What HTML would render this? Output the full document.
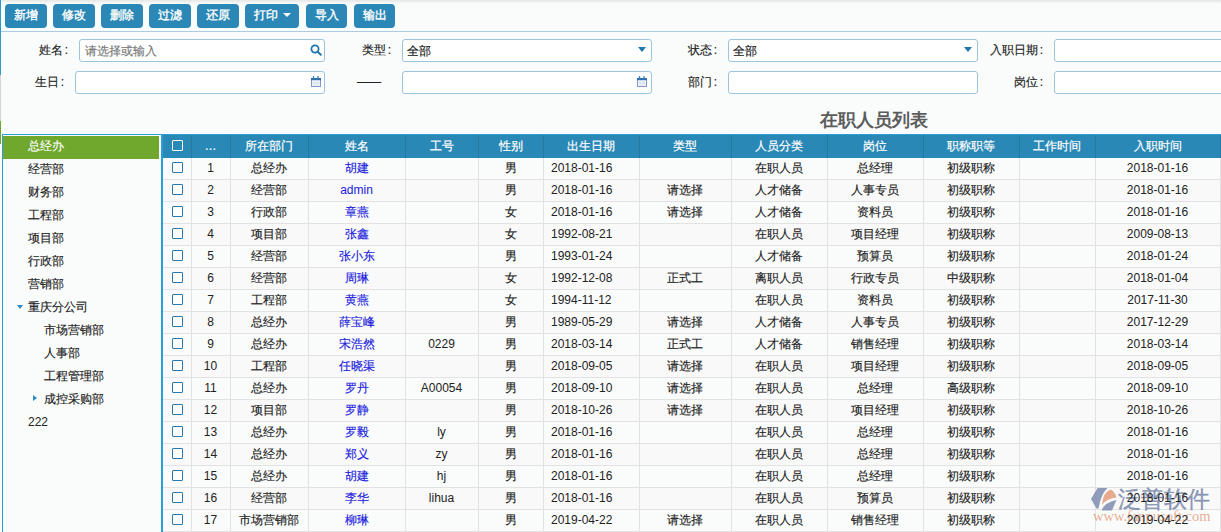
<!DOCTYPE html><html><head><meta charset="utf-8"><style>
*{margin:0;padding:0;box-sizing:border-box}
html,body{width:1221px;height:532px;overflow:hidden}
body{position:relative;background:#fafcfc;font-family:"Liberation Sans",sans-serif;font-size:12px;color:#222}
.c{-webkit-text-stroke:0.15px currentColor}
.a{position:absolute}
.btn{position:absolute;top:4px;height:24px;background:#2b88b6;border-radius:4px;color:#fff;font-size:12px;line-height:22px;text-align:center;-webkit-text-stroke:0.35px #fff}
.lbl{-webkit-text-stroke:0.15px currentColor;position:absolute;font-size:12px;color:#222;line-height:14px;white-space:nowrap}
.inp{position:absolute;height:23px;border:1px solid #9cc3e0;border-radius:3px;background:#fff}
.th{-webkit-text-stroke:0.2px #fff;position:absolute;top:135px;height:23px;line-height:23px;color:#fff;text-align:center;font-size:12px;white-space:nowrap}
.vs{position:absolute;width:1px}
.td{z-index:2;position:absolute;height:21px;line-height:21px;text-align:center;white-space:nowrap;color:#222}
.tree{-webkit-text-stroke:0.15px currentColor;position:absolute;left:28px;height:23px;line-height:23px;white-space:nowrap;color:#222}
</style></head><body>
<div class="a" style="left:0;top:0;width:1221px;height:3px;background:linear-gradient(#e6e7e7,#f5f6f6)"></div>
<div class="a" style="left:0;top:0;width:1px;height:75px;background:#2a9ad3"></div>
<div class="a" style="left:0;top:75px;width:1px;height:46px;background:#d6d6d6"></div>
<div class="a" style="left:0;top:121px;width:1px;height:23px;background:#6ea82b"></div>
<div class="btn" style="left:5px;width:42px">新增</div>
<div class="btn" style="left:53px;width:42px">修改</div>
<div class="btn" style="left:101px;width:42px">删除</div>
<div class="btn" style="left:149px;width:42px">过滤</div>
<div class="btn" style="left:197px;width:42px">还原</div>
<div class="btn" style="left:245px;width:54px;text-align:left;padding-left:9px">打印<span class="a" style="left:38px;top:9px;width:0;height:0;border-left:4px solid transparent;border-right:4px solid transparent;border-top:4px solid #fff"></span></div>
<div class="btn" style="left:306px;width:41px">导入</div>
<div class="btn" style="left:354px;width:41px">输出</div>
<div class="a" style="left:1px;top:31px;width:1220px;height:1px;background:#a9cbe3"></div>
<div class="lbl" style="right:1153px;top:43px">姓名<span style="margin-left:1.5px">:</span></div>
<div class="lbl" style="right:830px;top:43px">类型<span style="margin-left:1.5px">:</span></div>
<div class="lbl" style="right:504px;top:43px">状态<span style="margin-left:1.5px">:</span></div>
<div class="lbl" style="right:178px;top:43px">入职日期<span style="margin-left:1.5px">:</span></div>
<div class="lbl" style="right:1157px;top:75px">生日<span style="margin-left:1.5px">:</span></div>
<div class="lbl" style="right:504px;top:75px">部门<span style="margin-left:1.5px">:</span></div>
<div class="lbl" style="right:178px;top:75px">岗位<span style="margin-left:1.5px">:</span></div>
<div class="lbl" style="left:357px;top:75px">——</div>
<div class="inp" style="left:79px;top:39px;width:246px"><span class="a c" style="left:5px;top:3px;line-height:16px;color:#777">请选择或输入</span></div>
<div class="inp" style="left:402px;top:39px;width:250px"><span class="a c" style="left:4px;top:3px;line-height:16px;color:#111">全部</span></div>
<div class="inp" style="left:728px;top:39px;width:250px"><span class="a c" style="left:4px;top:3px;line-height:16px;color:#111">全部</span></div>
<div class="inp" style="left:1054px;top:39px;width:250px"></div>
<div class="inp" style="left:75px;top:71px;width:250px"></div>
<div class="inp" style="left:402px;top:71px;width:250px"></div>
<div class="inp" style="left:728px;top:71px;width:250px"></div>
<div class="inp" style="left:1054px;top:71px;width:250px"></div>
<svg class="a" style="left:310px;top:44px" width="12" height="12" viewBox="0 0 12 12"><circle cx="5" cy="5" r="3.6" fill="none" stroke="#1f78ad" stroke-width="1.8"/><path d="M7.6 7.6 L10.8 10.8" stroke="#1f78ad" stroke-width="2" stroke-linecap="round"/></svg>
<svg class="a" style="left:311px;top:76px" width="10" height="11" viewBox="0 0 10 11"><rect x="0.5" y="2.5" width="9" height="8" fill="#f3f6fa" stroke="#8398c8" stroke-width="1"/><rect x="0" y="2" width="10" height="2.2" fill="#2f6fae"/><path d="M2.5 0 V3 M7 0 V3" stroke="#3f7cb6" stroke-width="1.3"/><path d="M3 4.5 V10 M5 4.5 V10 M7 4.5 V10 M1 7 H9" stroke="#d3e2ef" stroke-width="0.8"/></svg>
<svg class="a" style="left:637px;top:76px" width="10" height="11" viewBox="0 0 10 11"><rect x="0.5" y="2.5" width="9" height="8" fill="#f3f6fa" stroke="#8398c8" stroke-width="1"/><rect x="0" y="2" width="10" height="2.2" fill="#2f6fae"/><path d="M2.5 0 V3 M7 0 V3" stroke="#3f7cb6" stroke-width="1.3"/><path d="M3 4.5 V10 M5 4.5 V10 M7 4.5 V10 M1 7 H9" stroke="#d3e2ef" stroke-width="0.8"/></svg>
<div class="a" style="left:638px;top:47px;width:0;height:0;border-left:4px solid transparent;border-right:4px solid transparent;border-top:5px solid #1f78ad"></div>
<div class="a" style="left:964px;top:47px;width:0;height:0;border-left:4px solid transparent;border-right:4px solid transparent;border-top:5px solid #1f78ad"></div>
<div class="a" style="left:820px;top:109px;font-size:18px;font-weight:bold;color:#5c5c5c;line-height:22px;white-space:nowrap">在职人员列表</div>
<div class="a" style="left:2px;top:134px;width:160px;height:400px;border:1px solid #2a9ed7;border-bottom:none;background:#fafcfc"></div>
<div class="a" style="left:3px;top:136px;width:156px;height:23px;background:#6fa82c"></div>
<div class="tree" style="left:28px;top:135px;color:#fff">总经办</div>
<div class="tree" style="left:28px;top:158px;color:#222">经营部</div>
<div class="tree" style="left:28px;top:181px;color:#222">财务部</div>
<div class="tree" style="left:28px;top:204px;color:#222">工程部</div>
<div class="tree" style="left:28px;top:227px;color:#222">项目部</div>
<div class="tree" style="left:28px;top:250px;color:#222">行政部</div>
<div class="tree" style="left:28px;top:273px;color:#222">营销部</div>
<div class="tree" style="left:28px;top:296px;color:#222">重庆分公司</div>
<div class="tree" style="left:44px;top:319px;color:#222">市场营销部</div>
<div class="tree" style="left:44px;top:342px;color:#222">人事部</div>
<div class="tree" style="left:44px;top:365px;color:#222">工程管理部</div>
<div class="tree" style="left:44px;top:388px;color:#222">成控采购部</div>
<div class="tree" style="left:28px;top:411px;color:#222;-webkit-text-stroke:0">222</div>
<div class="a" style="left:17px;top:305px;width:0;height:0;border-left:3px solid transparent;border-right:3px solid transparent;border-top:4px solid #2a8cc4"></div>
<div class="a" style="left:33px;top:395px;width:0;height:0;border-top:3.5px solid transparent;border-bottom:3.5px solid transparent;border-left:4px solid #2a8cc4"></div>
<div class="a" style="left:161px;top:134px;width:2px;height:400px;background:#2a9ed7"></div>
<div class="a" style="left:163px;top:134px;width:1058px;height:1px;background:#2a9ed7"></div>
<div class="a" style="left:163px;top:135px;width:1058px;height:23px;background:#2a88b6"></div>
<div class="vs" style="left:191px;top:135px;height:23px;background:#2679a3"></div>
<div class="vs" style="left:230px;top:135px;height:23px;background:#2679a3"></div>
<div class="vs" style="left:308px;top:135px;height:23px;background:#2679a3"></div>
<div class="vs" style="left:405px;top:135px;height:23px;background:#2679a3"></div>
<div class="vs" style="left:478px;top:135px;height:23px;background:#2679a3"></div>
<div class="vs" style="left:543px;top:135px;height:23px;background:#2679a3"></div>
<div class="vs" style="left:639px;top:135px;height:23px;background:#2679a3"></div>
<div class="vs" style="left:731px;top:135px;height:23px;background:#2679a3"></div>
<div class="vs" style="left:827px;top:135px;height:23px;background:#2679a3"></div>
<div class="vs" style="left:923px;top:135px;height:23px;background:#2679a3"></div>
<div class="vs" style="left:1019px;top:135px;height:23px;background:#2679a3"></div>
<div class="vs" style="left:1095px;top:135px;height:23px;background:#2679a3"></div>
<div class="vs" style="left:1220px;top:135px;height:23px;background:#2679a3"></div>
<div class="a" style="left:172px;top:140px;width:11px;height:11px;border:1.5px solid #fff;border-radius:1px"></div>
<div class="th" style="left:191px;width:39px">…</div>
<div class="th" style="left:230px;width:78px">所在部门</div>
<div class="th" style="left:308px;width:97px">姓名</div>
<div class="th" style="left:405px;width:73px">工号</div>
<div class="th" style="left:478px;width:65px">性别</div>
<div class="th" style="left:543px;width:96px">出生日期</div>
<div class="th" style="left:639px;width:92px">类型</div>
<div class="th" style="left:731px;width:96px">人员分类</div>
<div class="th" style="left:827px;width:96px">岗位</div>
<div class="th" style="left:923px;width:96px">职称职等</div>
<div class="th" style="left:1019px;width:76px">工作时间</div>
<div class="th" style="left:1095px;width:125px">入职时间</div>
<div class="a" style="left:163px;top:158px;width:1058px;height:21px;background:#fafcfc"></div>
<div class="a" style="left:163px;top:179px;width:1058px;height:1px;background:#e2e2e2"></div>
<div class="a" style="left:172px;top:162px;width:10.5px;height:10.5px;border:1.5px solid #2a78b0;border-radius:1px;background:#fff"></div>
<div class="td" style="left:191px;width:39px;top:158px;color:#222">1</div>
<div class="td c" style="left:230px;width:78px;top:158px;color:#222">总经办</div>
<div class="td c" style="left:308px;width:97px;top:158px;color:#2020e0">胡建</div>
<div class="td c" style="left:478px;width:65px;top:158px;color:#222">男</div>
<div class="td" style="left:551px;top:158px;text-align:left;color:#222">2018-01-16</div>
<div class="td c" style="left:731px;width:96px;top:158px;color:#222">在职人员</div>
<div class="td c" style="left:827px;width:96px;top:158px;color:#222">总经理</div>
<div class="td c" style="left:923px;width:96px;top:158px;color:#222">初级职称</div>
<div class="td" style="left:1095px;width:125px;top:158px;color:#222">2018-01-16</div>
<div class="a" style="left:163px;top:180px;width:1058px;height:21px;background:#f9f9f9"></div>
<div class="a" style="left:163px;top:201px;width:1058px;height:1px;background:#e2e2e2"></div>
<div class="a" style="left:172px;top:184px;width:10.5px;height:10.5px;border:1.5px solid #2a78b0;border-radius:1px;background:#fff"></div>
<div class="td" style="left:191px;width:39px;top:180px;color:#222">2</div>
<div class="td c" style="left:230px;width:78px;top:180px;color:#222">经营部</div>
<div class="td" style="left:308px;width:97px;top:180px;color:#2020e0">admin</div>
<div class="td c" style="left:478px;width:65px;top:180px;color:#222">男</div>
<div class="td" style="left:551px;top:180px;text-align:left;color:#222">2018-01-16</div>
<div class="td c" style="left:639px;width:92px;top:180px;color:#222">请选择</div>
<div class="td c" style="left:731px;width:96px;top:180px;color:#222">人才储备</div>
<div class="td c" style="left:827px;width:96px;top:180px;color:#222">人事专员</div>
<div class="td c" style="left:923px;width:96px;top:180px;color:#222">初级职称</div>
<div class="td" style="left:1095px;width:125px;top:180px;color:#222">2018-01-16</div>
<div class="a" style="left:163px;top:202px;width:1058px;height:21px;background:#fafcfc"></div>
<div class="a" style="left:163px;top:223px;width:1058px;height:1px;background:#e2e2e2"></div>
<div class="a" style="left:172px;top:206px;width:10.5px;height:10.5px;border:1.5px solid #2a78b0;border-radius:1px;background:#fff"></div>
<div class="td" style="left:191px;width:39px;top:202px;color:#222">3</div>
<div class="td c" style="left:230px;width:78px;top:202px;color:#222">行政部</div>
<div class="td c" style="left:308px;width:97px;top:202px;color:#2020e0">章燕</div>
<div class="td c" style="left:478px;width:65px;top:202px;color:#222">女</div>
<div class="td" style="left:551px;top:202px;text-align:left;color:#222">2018-01-16</div>
<div class="td c" style="left:639px;width:92px;top:202px;color:#222">请选择</div>
<div class="td c" style="left:731px;width:96px;top:202px;color:#222">人才储备</div>
<div class="td c" style="left:827px;width:96px;top:202px;color:#222">资料员</div>
<div class="td c" style="left:923px;width:96px;top:202px;color:#222">初级职称</div>
<div class="td" style="left:1095px;width:125px;top:202px;color:#222">2018-01-16</div>
<div class="a" style="left:163px;top:224px;width:1058px;height:21px;background:#f9f9f9"></div>
<div class="a" style="left:163px;top:245px;width:1058px;height:1px;background:#e2e2e2"></div>
<div class="a" style="left:172px;top:228px;width:10.5px;height:10.5px;border:1.5px solid #2a78b0;border-radius:1px;background:#fff"></div>
<div class="td" style="left:191px;width:39px;top:224px;color:#222">4</div>
<div class="td c" style="left:230px;width:78px;top:224px;color:#222">项目部</div>
<div class="td c" style="left:308px;width:97px;top:224px;color:#2020e0">张鑫</div>
<div class="td c" style="left:478px;width:65px;top:224px;color:#222">女</div>
<div class="td" style="left:551px;top:224px;text-align:left;color:#222">1992-08-21</div>
<div class="td c" style="left:731px;width:96px;top:224px;color:#222">在职人员</div>
<div class="td c" style="left:827px;width:96px;top:224px;color:#222">项目经理</div>
<div class="td c" style="left:923px;width:96px;top:224px;color:#222">初级职称</div>
<div class="td" style="left:1095px;width:125px;top:224px;color:#222">2009-08-13</div>
<div class="a" style="left:163px;top:246px;width:1058px;height:21px;background:#fafcfc"></div>
<div class="a" style="left:163px;top:267px;width:1058px;height:1px;background:#e2e2e2"></div>
<div class="a" style="left:172px;top:250px;width:10.5px;height:10.5px;border:1.5px solid #2a78b0;border-radius:1px;background:#fff"></div>
<div class="td" style="left:191px;width:39px;top:246px;color:#222">5</div>
<div class="td c" style="left:230px;width:78px;top:246px;color:#222">经营部</div>
<div class="td c" style="left:308px;width:97px;top:246px;color:#2020e0">张小东</div>
<div class="td c" style="left:478px;width:65px;top:246px;color:#222">男</div>
<div class="td" style="left:551px;top:246px;text-align:left;color:#222">1993-01-24</div>
<div class="td c" style="left:731px;width:96px;top:246px;color:#222">人才储备</div>
<div class="td c" style="left:827px;width:96px;top:246px;color:#222">预算员</div>
<div class="td c" style="left:923px;width:96px;top:246px;color:#222">初级职称</div>
<div class="td" style="left:1095px;width:125px;top:246px;color:#222">2018-01-24</div>
<div class="a" style="left:163px;top:268px;width:1058px;height:21px;background:#f9f9f9"></div>
<div class="a" style="left:163px;top:289px;width:1058px;height:1px;background:#e2e2e2"></div>
<div class="a" style="left:172px;top:272px;width:10.5px;height:10.5px;border:1.5px solid #2a78b0;border-radius:1px;background:#fff"></div>
<div class="td" style="left:191px;width:39px;top:268px;color:#222">6</div>
<div class="td c" style="left:230px;width:78px;top:268px;color:#222">经营部</div>
<div class="td c" style="left:308px;width:97px;top:268px;color:#2020e0">周琳</div>
<div class="td c" style="left:478px;width:65px;top:268px;color:#222">女</div>
<div class="td" style="left:551px;top:268px;text-align:left;color:#222">1992-12-08</div>
<div class="td c" style="left:639px;width:92px;top:268px;color:#222">正式工</div>
<div class="td c" style="left:731px;width:96px;top:268px;color:#222">离职人员</div>
<div class="td c" style="left:827px;width:96px;top:268px;color:#222">行政专员</div>
<div class="td c" style="left:923px;width:96px;top:268px;color:#222">中级职称</div>
<div class="td" style="left:1095px;width:125px;top:268px;color:#222">2018-01-04</div>
<div class="a" style="left:163px;top:290px;width:1058px;height:21px;background:#fafcfc"></div>
<div class="a" style="left:163px;top:311px;width:1058px;height:1px;background:#e2e2e2"></div>
<div class="a" style="left:172px;top:294px;width:10.5px;height:10.5px;border:1.5px solid #2a78b0;border-radius:1px;background:#fff"></div>
<div class="td" style="left:191px;width:39px;top:290px;color:#222">7</div>
<div class="td c" style="left:230px;width:78px;top:290px;color:#222">工程部</div>
<div class="td c" style="left:308px;width:97px;top:290px;color:#2020e0">黄燕</div>
<div class="td c" style="left:478px;width:65px;top:290px;color:#222">女</div>
<div class="td" style="left:551px;top:290px;text-align:left;color:#222">1994-11-12</div>
<div class="td c" style="left:731px;width:96px;top:290px;color:#222">在职人员</div>
<div class="td c" style="left:827px;width:96px;top:290px;color:#222">资料员</div>
<div class="td c" style="left:923px;width:96px;top:290px;color:#222">初级职称</div>
<div class="td" style="left:1095px;width:125px;top:290px;color:#222">2017-11-30</div>
<div class="a" style="left:163px;top:312px;width:1058px;height:21px;background:#f9f9f9"></div>
<div class="a" style="left:163px;top:333px;width:1058px;height:1px;background:#e2e2e2"></div>
<div class="a" style="left:172px;top:316px;width:10.5px;height:10.5px;border:1.5px solid #2a78b0;border-radius:1px;background:#fff"></div>
<div class="td" style="left:191px;width:39px;top:312px;color:#222">8</div>
<div class="td c" style="left:230px;width:78px;top:312px;color:#222">总经办</div>
<div class="td c" style="left:308px;width:97px;top:312px;color:#2020e0">薛宝峰</div>
<div class="td c" style="left:478px;width:65px;top:312px;color:#222">男</div>
<div class="td" style="left:551px;top:312px;text-align:left;color:#222">1989-05-29</div>
<div class="td c" style="left:639px;width:92px;top:312px;color:#222">请选择</div>
<div class="td c" style="left:731px;width:96px;top:312px;color:#222">人才储备</div>
<div class="td c" style="left:827px;width:96px;top:312px;color:#222">人事专员</div>
<div class="td c" style="left:923px;width:96px;top:312px;color:#222">初级职称</div>
<div class="td" style="left:1095px;width:125px;top:312px;color:#222">2017-12-29</div>
<div class="a" style="left:163px;top:334px;width:1058px;height:21px;background:#fafcfc"></div>
<div class="a" style="left:163px;top:355px;width:1058px;height:1px;background:#e2e2e2"></div>
<div class="a" style="left:172px;top:338px;width:10.5px;height:10.5px;border:1.5px solid #2a78b0;border-radius:1px;background:#fff"></div>
<div class="td" style="left:191px;width:39px;top:334px;color:#222">9</div>
<div class="td c" style="left:230px;width:78px;top:334px;color:#222">总经办</div>
<div class="td c" style="left:308px;width:97px;top:334px;color:#2020e0">宋浩然</div>
<div class="td" style="left:405px;width:73px;top:334px;color:#222">0229</div>
<div class="td c" style="left:478px;width:65px;top:334px;color:#222">男</div>
<div class="td" style="left:551px;top:334px;text-align:left;color:#222">2018-03-14</div>
<div class="td c" style="left:639px;width:92px;top:334px;color:#222">正式工</div>
<div class="td c" style="left:731px;width:96px;top:334px;color:#222">人才储备</div>
<div class="td c" style="left:827px;width:96px;top:334px;color:#222">销售经理</div>
<div class="td c" style="left:923px;width:96px;top:334px;color:#222">初级职称</div>
<div class="td" style="left:1095px;width:125px;top:334px;color:#222">2018-03-14</div>
<div class="a" style="left:163px;top:356px;width:1058px;height:21px;background:#f9f9f9"></div>
<div class="a" style="left:163px;top:377px;width:1058px;height:1px;background:#e2e2e2"></div>
<div class="a" style="left:172px;top:360px;width:10.5px;height:10.5px;border:1.5px solid #2a78b0;border-radius:1px;background:#fff"></div>
<div class="td" style="left:191px;width:39px;top:356px;color:#222">10</div>
<div class="td c" style="left:230px;width:78px;top:356px;color:#222">工程部</div>
<div class="td c" style="left:308px;width:97px;top:356px;color:#2020e0">任晓渠</div>
<div class="td c" style="left:478px;width:65px;top:356px;color:#222">男</div>
<div class="td" style="left:551px;top:356px;text-align:left;color:#222">2018-09-05</div>
<div class="td c" style="left:639px;width:92px;top:356px;color:#222">请选择</div>
<div class="td c" style="left:731px;width:96px;top:356px;color:#222">在职人员</div>
<div class="td c" style="left:827px;width:96px;top:356px;color:#222">项目经理</div>
<div class="td c" style="left:923px;width:96px;top:356px;color:#222">初级职称</div>
<div class="td" style="left:1095px;width:125px;top:356px;color:#222">2018-09-05</div>
<div class="a" style="left:163px;top:378px;width:1058px;height:21px;background:#fafcfc"></div>
<div class="a" style="left:163px;top:399px;width:1058px;height:1px;background:#e2e2e2"></div>
<div class="a" style="left:172px;top:382px;width:10.5px;height:10.5px;border:1.5px solid #2a78b0;border-radius:1px;background:#fff"></div>
<div class="td" style="left:191px;width:39px;top:378px;color:#222">11</div>
<div class="td c" style="left:230px;width:78px;top:378px;color:#222">总经办</div>
<div class="td c" style="left:308px;width:97px;top:378px;color:#2020e0">罗丹</div>
<div class="td" style="left:405px;width:73px;top:378px;color:#222">A00054</div>
<div class="td c" style="left:478px;width:65px;top:378px;color:#222">男</div>
<div class="td" style="left:551px;top:378px;text-align:left;color:#222">2018-09-10</div>
<div class="td c" style="left:639px;width:92px;top:378px;color:#222">请选择</div>
<div class="td c" style="left:731px;width:96px;top:378px;color:#222">在职人员</div>
<div class="td c" style="left:827px;width:96px;top:378px;color:#222">总经理</div>
<div class="td c" style="left:923px;width:96px;top:378px;color:#222">高级职称</div>
<div class="td" style="left:1095px;width:125px;top:378px;color:#222">2018-09-10</div>
<div class="a" style="left:163px;top:400px;width:1058px;height:21px;background:#f9f9f9"></div>
<div class="a" style="left:163px;top:421px;width:1058px;height:1px;background:#e2e2e2"></div>
<div class="a" style="left:172px;top:404px;width:10.5px;height:10.5px;border:1.5px solid #2a78b0;border-radius:1px;background:#fff"></div>
<div class="td" style="left:191px;width:39px;top:400px;color:#222">12</div>
<div class="td c" style="left:230px;width:78px;top:400px;color:#222">项目部</div>
<div class="td c" style="left:308px;width:97px;top:400px;color:#2020e0">罗静</div>
<div class="td c" style="left:478px;width:65px;top:400px;color:#222">男</div>
<div class="td" style="left:551px;top:400px;text-align:left;color:#222">2018-10-26</div>
<div class="td c" style="left:639px;width:92px;top:400px;color:#222">请选择</div>
<div class="td c" style="left:731px;width:96px;top:400px;color:#222">在职人员</div>
<div class="td c" style="left:827px;width:96px;top:400px;color:#222">项目经理</div>
<div class="td c" style="left:923px;width:96px;top:400px;color:#222">初级职称</div>
<div class="td" style="left:1095px;width:125px;top:400px;color:#222">2018-10-26</div>
<div class="a" style="left:163px;top:422px;width:1058px;height:21px;background:#fafcfc"></div>
<div class="a" style="left:163px;top:443px;width:1058px;height:1px;background:#e2e2e2"></div>
<div class="a" style="left:172px;top:426px;width:10.5px;height:10.5px;border:1.5px solid #2a78b0;border-radius:1px;background:#fff"></div>
<div class="td" style="left:191px;width:39px;top:422px;color:#222">13</div>
<div class="td c" style="left:230px;width:78px;top:422px;color:#222">总经办</div>
<div class="td c" style="left:308px;width:97px;top:422px;color:#2020e0">罗毅</div>
<div class="td" style="left:405px;width:73px;top:422px;color:#222">ly</div>
<div class="td c" style="left:478px;width:65px;top:422px;color:#222">男</div>
<div class="td" style="left:551px;top:422px;text-align:left;color:#222">2018-01-16</div>
<div class="td c" style="left:731px;width:96px;top:422px;color:#222">在职人员</div>
<div class="td c" style="left:827px;width:96px;top:422px;color:#222">总经理</div>
<div class="td c" style="left:923px;width:96px;top:422px;color:#222">初级职称</div>
<div class="td" style="left:1095px;width:125px;top:422px;color:#222">2018-01-16</div>
<div class="a" style="left:163px;top:444px;width:1058px;height:21px;background:#f9f9f9"></div>
<div class="a" style="left:163px;top:465px;width:1058px;height:1px;background:#e2e2e2"></div>
<div class="a" style="left:172px;top:448px;width:10.5px;height:10.5px;border:1.5px solid #2a78b0;border-radius:1px;background:#fff"></div>
<div class="td" style="left:191px;width:39px;top:444px;color:#222">14</div>
<div class="td c" style="left:230px;width:78px;top:444px;color:#222">总经办</div>
<div class="td c" style="left:308px;width:97px;top:444px;color:#2020e0">郑义</div>
<div class="td" style="left:405px;width:73px;top:444px;color:#222">zy</div>
<div class="td c" style="left:478px;width:65px;top:444px;color:#222">男</div>
<div class="td" style="left:551px;top:444px;text-align:left;color:#222">2018-01-16</div>
<div class="td c" style="left:731px;width:96px;top:444px;color:#222">在职人员</div>
<div class="td c" style="left:827px;width:96px;top:444px;color:#222">总经理</div>
<div class="td c" style="left:923px;width:96px;top:444px;color:#222">初级职称</div>
<div class="td" style="left:1095px;width:125px;top:444px;color:#222">2018-01-16</div>
<div class="a" style="left:163px;top:466px;width:1058px;height:21px;background:#fafcfc"></div>
<div class="a" style="left:163px;top:487px;width:1058px;height:1px;background:#e2e2e2"></div>
<div class="a" style="left:172px;top:470px;width:10.5px;height:10.5px;border:1.5px solid #2a78b0;border-radius:1px;background:#fff"></div>
<div class="td" style="left:191px;width:39px;top:466px;color:#222">15</div>
<div class="td c" style="left:230px;width:78px;top:466px;color:#222">总经办</div>
<div class="td c" style="left:308px;width:97px;top:466px;color:#2020e0">胡建</div>
<div class="td" style="left:405px;width:73px;top:466px;color:#222">hj</div>
<div class="td c" style="left:478px;width:65px;top:466px;color:#222">男</div>
<div class="td" style="left:551px;top:466px;text-align:left;color:#222">2018-01-16</div>
<div class="td c" style="left:731px;width:96px;top:466px;color:#222">在职人员</div>
<div class="td c" style="left:827px;width:96px;top:466px;color:#222">总经理</div>
<div class="td c" style="left:923px;width:96px;top:466px;color:#222">初级职称</div>
<div class="td" style="left:1095px;width:125px;top:466px;color:#222">2018-01-16</div>
<div class="a" style="left:163px;top:488px;width:1058px;height:21px;background:#f9f9f9"></div>
<div class="a" style="left:163px;top:509px;width:1058px;height:1px;background:#e2e2e2"></div>
<div class="a" style="left:172px;top:492px;width:10.5px;height:10.5px;border:1.5px solid #2a78b0;border-radius:1px;background:#fff"></div>
<div class="td" style="left:191px;width:39px;top:488px;color:#222">16</div>
<div class="td c" style="left:230px;width:78px;top:488px;color:#222">经营部</div>
<div class="td c" style="left:308px;width:97px;top:488px;color:#2020e0">李华</div>
<div class="td" style="left:405px;width:73px;top:488px;color:#222">lihua</div>
<div class="td c" style="left:478px;width:65px;top:488px;color:#222">男</div>
<div class="td" style="left:551px;top:488px;text-align:left;color:#222">2018-01-16</div>
<div class="td c" style="left:731px;width:96px;top:488px;color:#222">在职人员</div>
<div class="td c" style="left:827px;width:96px;top:488px;color:#222">预算员</div>
<div class="td c" style="left:923px;width:96px;top:488px;color:#222">初级职称</div>
<div class="td" style="left:1095px;width:125px;top:488px;color:#222">2018-01-16</div>
<div class="a" style="left:163px;top:510px;width:1058px;height:21px;background:#fafcfc"></div>
<div class="a" style="left:163px;top:531px;width:1058px;height:1px;background:#e2e2e2"></div>
<div class="a" style="left:172px;top:514px;width:10.5px;height:10.5px;border:1.5px solid #2a78b0;border-radius:1px;background:#fff"></div>
<div class="td" style="left:191px;width:39px;top:510px;color:#222">17</div>
<div class="td c" style="left:230px;width:78px;top:510px;color:#222">市场营销部</div>
<div class="td c" style="left:308px;width:97px;top:510px;color:#2020e0">柳琳</div>
<div class="td c" style="left:478px;width:65px;top:510px;color:#222">男</div>
<div class="td" style="left:551px;top:510px;text-align:left;color:#222">2019-04-22</div>
<div class="td c" style="left:639px;width:92px;top:510px;color:#222">请选择</div>
<div class="td c" style="left:731px;width:96px;top:510px;color:#222">在职人员</div>
<div class="td c" style="left:827px;width:96px;top:510px;color:#222">销售经理</div>
<div class="td c" style="left:923px;width:96px;top:510px;color:#222">初级职称</div>
<div class="td" style="left:1095px;width:125px;top:510px;color:#222">2019-04-22</div>
<div class="vs" style="left:191px;top:158px;height:380px;background:#e2e2e2"></div>
<div class="vs" style="left:230px;top:158px;height:380px;background:#e2e2e2"></div>
<div class="vs" style="left:308px;top:158px;height:380px;background:#e2e2e2"></div>
<div class="vs" style="left:405px;top:158px;height:380px;background:#e2e2e2"></div>
<div class="vs" style="left:478px;top:158px;height:380px;background:#e2e2e2"></div>
<div class="vs" style="left:543px;top:158px;height:380px;background:#e2e2e2"></div>
<div class="vs" style="left:639px;top:158px;height:380px;background:#e2e2e2"></div>
<div class="vs" style="left:731px;top:158px;height:380px;background:#e2e2e2"></div>
<div class="vs" style="left:827px;top:158px;height:380px;background:#e2e2e2"></div>
<div class="vs" style="left:923px;top:158px;height:380px;background:#e2e2e2"></div>
<div class="vs" style="left:1019px;top:158px;height:380px;background:#e2e2e2"></div>
<div class="vs" style="left:1095px;top:158px;height:380px;background:#e2e2e2"></div>
<div class="vs" style="left:1220px;top:158px;height:380px;background:#e2e2e2"></div>
<svg class="a" style="z-index:1;left:1085px;top:482px" width="40" height="40" viewBox="0 0 40 40">
<path d="M6 17 L12.5 6 L22.5 6 Q16 12 13.5 26.5 L11.5 26.5 Z" fill="#7d8db0" opacity="0.85"/>
<path d="M17 23 Q18 10 25.5 7.5 Q29.5 9 31.5 15.5 Q22 16 17 23 Z" fill="#e3a285" opacity="0.9"/>
<path d="M16.5 28.5 Q19.5 20.5 31.5 18 L27 28.5 Z" fill="#7d8db0" opacity="0.85"/>
</svg>
<div class="a" style="z-index:1;left:1118px;top:486px;font-size:23px;line-height:26px;color:rgba(120,135,170,0.85);white-space:nowrap;-webkit-text-stroke:0.4px rgba(120,135,170,0.85)">泛普软件</div>
<div class="a" style="z-index:1;left:1093px;top:509px;font-family:'Liberation Serif',serif;font-size:14.5px;line-height:14px;color:rgba(225,150,120,0.8);white-space:nowrap">www.fanpusoft.com</div>
</body></html>
